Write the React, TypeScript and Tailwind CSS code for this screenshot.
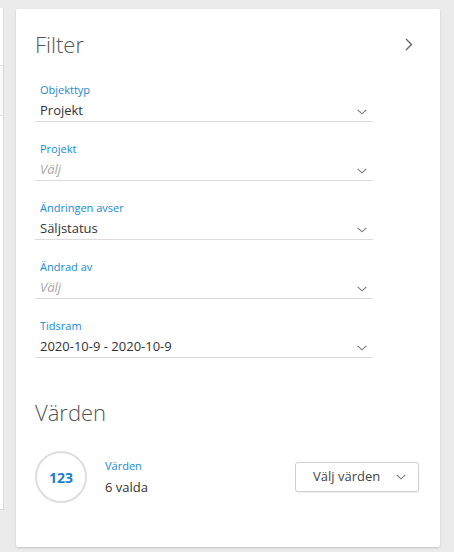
import React from 'react';

interface Field {
  label: string;
  value: string;
  placeholder?: boolean;
}

const fields: Field[] = [
  { label: 'Objekttyp', value: 'Projekt' },
  { label: 'Projekt', value: 'Välj', placeholder: true },
  { label: 'Ändringen avser', value: 'Säljstatus' },
  { label: 'Ändrad av', value: 'Välj', placeholder: true },
  { label: 'Tidsram', value: '2020-10-9 - 2020-10-9' },
];

const ChevronDown = ({ className = '' }: { className?: string }) => (
  <svg width="10" height="6" viewBox="0 0 10 6" className={className} fill="none">
    <path d="M0.7 0.8 L5 4.8 L9.3 0.8" stroke="#777" strokeWidth="1.1" />
  </svg>
);

const App: React.FC = () => {
  return (
    <div
      className="flex items-start gap-3 bg-[#ebebeb] w-[454px] h-[552px] overflow-hidden pt-2"
      style={{ fontFamily: '"Open Sans", "Liberation Sans", sans-serif' }}
    >
      {/* partial card at left edge */}
      <div className="w-[4px] h-[502px] bg-white border-r border-b border-[#d9d9d9] flex flex-col">
        <div className="h-[58px] border-b border-[#e3e3e3]" />
        <div className="h-[50px] bg-[#f9f9f9] border-b border-[#e3e3e3]" />
      </div>

      <div className="mt-[1px] w-[424px] h-[538px] bg-white rounded-[2px] shadow-[0_1px_2px_rgba(0,0,0,0.18)] pl-[19px] pr-[21px] pt-5">
        <div className="flex items-center justify-between pr-[6px]">
          <h2 className="text-[22px] leading-[30px] font-light text-[#555]">Filter</h2>
          <svg width="8" height="13" viewBox="0 0 8 13" fill="none" className="mt-[1px]">
            <path d="M1 1 L6.5 6.5 L1 12" stroke="#666" strokeWidth="1.4" />
          </svg>
        </div>

        <div className="mt-[23px] w-[338px] flex flex-col gap-[19px]">
          {fields.map((f, i) => (
            <div key={i} className="border-b border-[#dcdcdc] pb-[1px] pl-[5px]">
              <div className="text-[11px] leading-[16px] text-[#1a8ad4]">{f.label}</div>
              <div className="mt-[3px] h-[19px] flex items-center justify-between pr-[6px]">
                <span
                  className={
                    f.placeholder
                      ? 'text-[13px] italic text-[#a8a8a8]'
                      : 'text-[13px] text-[#333]'
                  }
                >
                  {f.value}
                </span>
                <ChevronDown className="mt-[2px]" />
              </div>
            </div>
          ))}
        </div>

        <h2 className="mt-[39px] text-[22px] leading-[30px] font-light text-[#555]">Värden</h2>

        <div className="mt-[24px] flex items-center">
          <div className="w-[52px] h-[52px] rounded-full border-2 border-[#dedede] flex items-center justify-center">
            <span className="text-[14px] font-bold text-[#1a7fcc]">123</span>
          </div>
          <div className="ml-[18px] flex flex-col">
            <span className="text-[11px] leading-[16px] text-[#1a8ad4]">Värden</span>
            <span className="mt-[3px] text-[13px] leading-[20px] text-[#333]">6 valda</span>
          </div>
          <button className="ml-auto w-[124px] h-[30px] border border-[#d0d0d0] rounded-[3px] bg-white shadow-[0_1px_1px_rgba(0,0,0,0.06)] flex items-center pl-[17px] text-[13px] text-[#444]">
            Välj värden
            <ChevronDown className="ml-[16px]" />
          </button>
        </div>
      </div>
    </div>
  );
};

export default App;
